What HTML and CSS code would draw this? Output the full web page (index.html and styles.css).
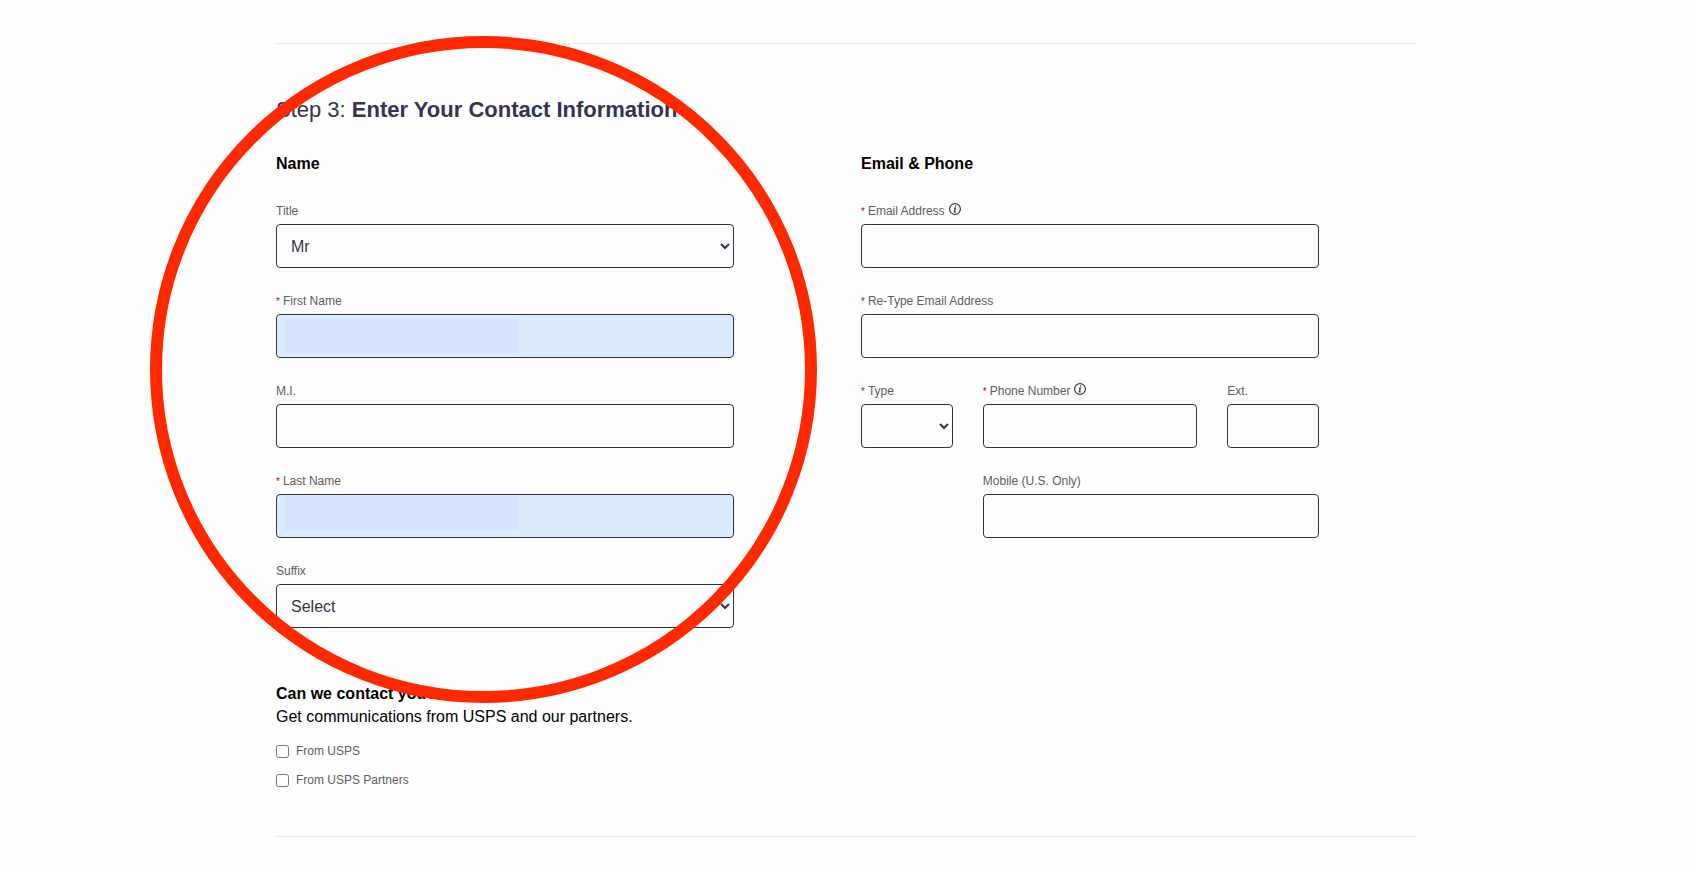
FILE: index.html
```html
<!DOCTYPE html>
<html lang="en">
  <head>
    <meta charset="UTF-8" />
    <meta name="viewport" content="width=device-width, initial-scale=1.0" />
    <title>Enter Your Contact Information</title>
    <link rel="stylesheet" href="styles.css">
  </head>
  <body>
    <main class="container">
      <div class="highlight-circle" aria-hidden="true"></div>

      <form class="step">
        <h2>Step 3: <strong>Enter Your Contact Information</strong></h2>

        <div class="columns">
          <!-- Name -->
          <section class="column">
            <h3>Name</h3>
            <div class="field">
              <label for="title">Title</label>
              <select id="title">
                <option>Select</option>
                <option selected>Mr</option>
                <option>Mrs</option>
                <option>Ms</option>
              </select>
            </div>
            <div class="field">
              <label for="first-name"><span class="required">*</span>First Name</label>
              <div class="filled">
                <input type="text" id="first-name" />
                <span class="mask"></span>
              </div>
            </div>
            <div class="field">
              <label for="mi">M.I.</label>
              <input type="text" id="mi" />
            </div>
            <div class="field">
              <label for="last-name"><span class="required">*</span>Last Name</label>
              <div class="filled">
                <input type="text" id="last-name" />
                <span class="mask mask-high"></span>
              </div>
            </div>
            <div class="field">
              <label for="suffix">Suffix</label>
              <select id="suffix">
                <option selected>Select</option>
                <option>Jr</option>
                <option>Sr</option>
              </select>
            </div>
          </section>

          <!-- Email & Phone -->
          <section class="column">
            <h3>Email &amp; Phone</h3>
            <div class="field">
              <div class="label-row">
                <label for="email"><span class="required">*</span>Email Address</label>
                <button type="button" class="info" aria-label="About email address">
                  <svg viewBox="0 0 12 12" width="12" height="12">
                    <circle cx="6" cy="6" r="5.4" />
                    <path d="M5 5.2h1.3L5.4 8.9h1.3" />
                    <path d="M6.6 2.6v1.2" />
                  </svg>
                </button>
              </div>
              <input type="email" id="email" />
            </div>
            <div class="field">
              <label for="email-again"><span class="required">*</span>Re-Type Email Address</label>
              <input type="email" id="email-again" />
            </div>
            <div class="phone-grid">
              <div class="field">
                <label for="phone-type"><span class="required">*</span>Type</label>
                <select id="phone-type">
                  <option selected></option>
                  <option>Home</option>
                  <option>Work</option>
                </select>
              </div>
              <div class="field">
                <div class="label-row">
                  <label for="phone"><span class="required">*</span>Phone Number</label>
                  <button type="button" class="info" aria-label="About phone number">
                    <svg viewBox="0 0 12 12" width="12" height="12">
                      <circle cx="6" cy="6" r="5.4" />
                      <path d="M5 5.2h1.3L5.4 8.9h1.3" />
                      <path d="M6.6 2.6v1.2" />
                    </svg>
                  </button>
                </div>
                <input type="tel" id="phone" />
              </div>
              <div class="field">
                <label for="ext">Ext.</label>
                <input type="text" id="ext" />
              </div>
              <div class="field mobile">
                <label for="mobile">Mobile (U.S. Only)</label>
                <input type="tel" id="mobile" />
              </div>
            </div>
          </section>
        </div>

        <!-- Contact preferences -->
        <section class="preferences">
          <h3>Can we contact you?</h3>
          <p>Get communications from USPS and our partners.</p>
          <div class="check">
            <input type="checkbox" id="from-usps" />
            <label for="from-usps">From USPS</label>
          </div>
          <div class="check">
            <input type="checkbox" id="from-partners" />
            <label for="from-partners">From USPS Partners</label>
          </div>
        </section>
      </form>
    </main>
  </body>
</html>
```
FILE: styles.css
```css
* {
  margin: 0;
  padding: 0;
  box-sizing: border-box;
}

body {
  font-family: "Liberation Sans", Arial, sans-serif;
  font-size: 16px;
  background-color: #fefefe;
  color: #000;
}

.container {
  position: relative;
  width: 90%;
  max-width: 1140px;
  margin: 43px auto 0;
}

.step {
  border-top: 1px solid #ebebeb;
  border-bottom: 1px solid #ebebeb;
  padding: 53px 0 35px;
}

h2 {
  font-size: 22px;
  line-height: 26px;
  font-weight: normal;
  color: #333358;
}

h3 {
  font-size: 16px;
  line-height: 22px;
}

.columns {
  display: grid;
  grid-template-columns: 1fr 1fr;
  gap: 30px;
  margin-top: 30px;
}

.column {
  padding-right: 97px;
}

.column h3 {
  margin-bottom: 28px;
}

.field {
  margin-bottom: 25px;
}

label {
  display: block;
  font-size: 12px;
  line-height: 16px;
  color: #5c5c5c;
}

.field > label,
.label-row {
  margin-bottom: 5px;
}

.field input,
.field select {
  display: block;
  width: 100%;
  height: 44px;
  padding: 0 10px;
  border: 1px solid #333347;
  border-radius: 4px;
  background-color: #fefefe;
  font-family: inherit;
  font-size: 16px;
  color: #333347;
}

.field select {
  padding-right: 0;
}

.required {
  margin-right: 3px;
  font-size: 10px;
  line-height: 1;
  color: #cc0000;
}

.label-row {
  display: flex;
  gap: 4px;
}

.info {
  height: 12px;
  border: none;
  background: none;
  cursor: pointer;
}

.info svg {
  display: block;
  fill: none;
  stroke: #333358;
  stroke-width: 1.2;
}

/* Autofilled boxes with the value covered */
.filled {
  position: relative;
}

.field .filled input {
  background-color: #dbecff;
}

.mask {
  position: absolute;
  top: 5px;
  left: 9px;
  width: 51%;
  height: 34px;
  background-color: #d4e3ff;
}

.mask-high {
  top: 2px;
}

.phone-grid {
  display: grid;
  grid-template-columns: 3fr 7fr 3fr;
  column-gap: 30px;
}

.mobile {
  grid-column: 2 / 4;
}

.preferences {
  margin-top: 30px;
}

.preferences p {
  line-height: 24px;
  margin-bottom: 14px;
}

.check {
  display: flex;
  align-items: center;
  gap: 7px;
  margin-bottom: 13px;
}

.check input {
  width: 13px;
  height: 13px;
}

/* Red ring drawn over the name section */
.highlight-circle {
  position: absolute;
  top: -7px;
  left: -126px;
  width: 667px;
  height: 667px;
  border: 12px solid #ff2900;
  border-radius: 50%;
  pointer-events: none;
  z-index: 1;
}
```
